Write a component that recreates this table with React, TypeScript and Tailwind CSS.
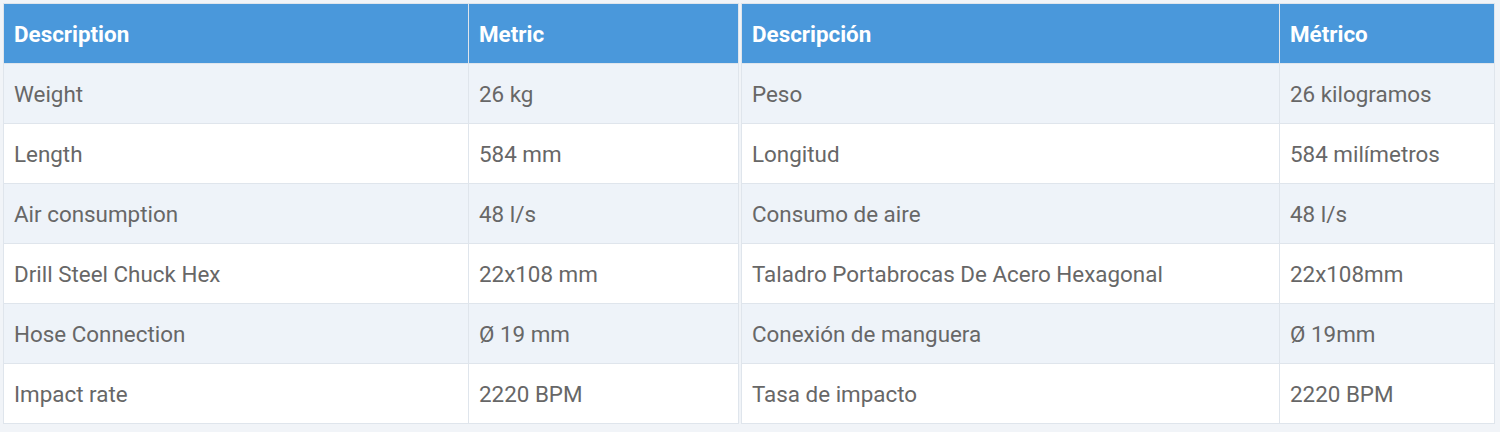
const left = {
  head: ['Description', 'Metric'],
  rows: [
    ['Weight', '26 kg'],
    ['Length', '584 mm'],
    ['Air consumption', '48 l/s'],
    ['Drill Steel Chuck Hex', '22x108 mm'],
    ['Hose Connection', 'Ø 19 mm'],
    ['Impact rate', '2220 BPM'],
  ],
}

const right = {
  head: ['Descripción', 'Métrico'],
  rows: [
    ['Peso', '26 kilogramos'],
    ['Longitud', '584 milímetros'],
    ['Consumo de aire', '48 l/s'],
    ['Taladro Portabrocas De Acero Hexagonal', '22x108mm'],
    ['Conexión de manguera', 'Ø 19mm'],
    ['Tasa de impacto', '2220 BPM'],
  ],
}

function SpecTable({
  data,
  widths,
}: {
  data: { head: string[]; rows: string[][] }
  widths: string[]
}) {
  return (
    <table className="border-collapse bg-white table-fixed">
      <colgroup>
        <col className={widths[0]} />
        <col className={widths[1]} />
      </colgroup>
      <thead>
        <tr className="h-[60px] bg-[#4a98db]">
          {data.head.map((h) => (
            <th
              key={h}
              className="border border-[#dfe5ec] pl-[10px] pr-3 pt-[2px] text-left text-[22.4px] font-bold text-white"
            >
              {h}
            </th>
          ))}
        </tr>
      </thead>
      <tbody>
        {data.rows.map((row, i) => (
          <tr key={i} className={`h-[60px] ${i % 2 === 0 ? 'bg-[#eef3f9]' : 'bg-white'}`}>
            {row.map((cell, j) => (
              <td
                key={j}
                className="border border-[#dfe5ec] pl-[10px] pr-3 pt-[2px] text-[22.4px] text-[#676767]"
              >
                {cell}
              </td>
            ))}
          </tr>
        ))}
      </tbody>
    </table>
  )
}

export default function App() {
  return (
    <div
      className="flex h-[432px] w-[1500px] items-start gap-[2px] bg-[#f1f4f8] pl-[3px] pt-[3px]"
      style={{ fontFamily: 'Roboto, "Liberation Sans", sans-serif' }}
    >
      <SpecTable data={left} widths={['w-[465px]', 'w-[270px]']} />
      <SpecTable data={right} widths={['w-[538px]', 'w-[215px]']} />
    </div>
  )
}
